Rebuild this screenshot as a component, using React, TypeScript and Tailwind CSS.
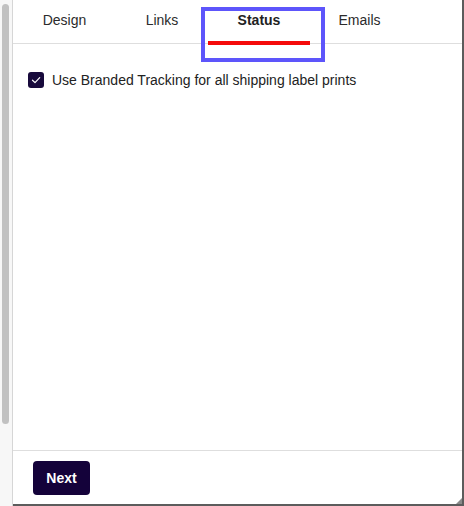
import React from "react";

export default function App() {
  const tabs = [
    { t: "Design", w: "w-[103px]" },
    { t: "Links", w: "w-[92px]" },
    { t: "Status", w: "w-[102px]" },
    { t: "Emails", w: "w-[99px]" },
  ];
  return (
    <div
      className="relative flex h-[506px] w-[464px] overflow-hidden bg-white"
      style={{ fontFamily: "'Liberation Sans', Arial, sans-serif" }}
    >
      {/* left scrollbar strip */}
      <div className="flex w-[13px] shrink-0 flex-col border-r border-[#d6d6d6] bg-[#f7f7f7] pb-[2px]">
        <div className="ml-[2px] mt-[4px] h-[420px] w-[7px] rounded-full bg-[#c1c1c1]" />
      </div>

      {/* main column */}
      <div className="flex min-w-0 flex-1 flex-col border-b-2 border-r-2 border-[#5c5c5c]">
        {/* tabs */}
        <div className="flex h-[44px] shrink-0 border-b border-[#dedede]">
          {tabs.map(({ t, w }) => {
            const active = t === "Status";
            return (
              <div
                key={t}
                className={
                  active
                    ? `relative flex h-[44px] ${w} items-start justify-center pt-[10px] text-[14px] font-bold text-[#222]`
                    : `relative flex h-[44px] ${w} items-start justify-center pt-[10px] text-[14px] text-[#2b2b2b]`
                }
              >
                {t}
                {active && (
                  <div className="absolute bottom-[-1px] left-0 right-0 h-[4px] bg-[#f50a0a]" />
                )}
              </div>
            );
          })}
        </div>

        {/* content */}
        <div className="flex flex-1 flex-col px-[15px] pt-[26px]">
          <label className="flex items-center gap-[8px] text-[14px] leading-[20px] text-[#222]">
            <span className="flex h-[16px] w-[16px] items-center justify-center rounded-[3px] bg-[#180a3c]">
              <svg width="10" height="10" viewBox="0 0 10 10" fill="none">
                <path
                  d="M1.5 5.2 L4 7.6 L8.7 2.6"
                  stroke="white"
                  strokeWidth="1.2"
                  strokeLinecap="round"
                  strokeLinejoin="round"
                />
              </svg>
            </span>
            Use Branded Tracking for all shipping label prints
          </label>
        </div>

        {/* footer */}
        <div className="flex h-[54px] shrink-0 items-start border-t border-[#dedede] px-[20px] pt-[10px]">
          <button className="h-[34px] w-[57px] rounded-[4px] bg-[#14023a] text-[14px] font-bold text-white">
            Next
          </button>
        </div>
      </div>

      {/* resize grip */}
      <svg className="absolute bottom-[2px] right-[2px]" width="6" height="6" viewBox="0 0 6 6">
        <path d="M6 0 L6 6 L0 6 Z" fill="#8a8a8a" />
      </svg>

      {/* annotation box */}
      <div className="absolute left-[201px] top-[7px] h-[55px] w-[124px] border-4 border-[#5d55fb]" />
    </div>
  );
}
